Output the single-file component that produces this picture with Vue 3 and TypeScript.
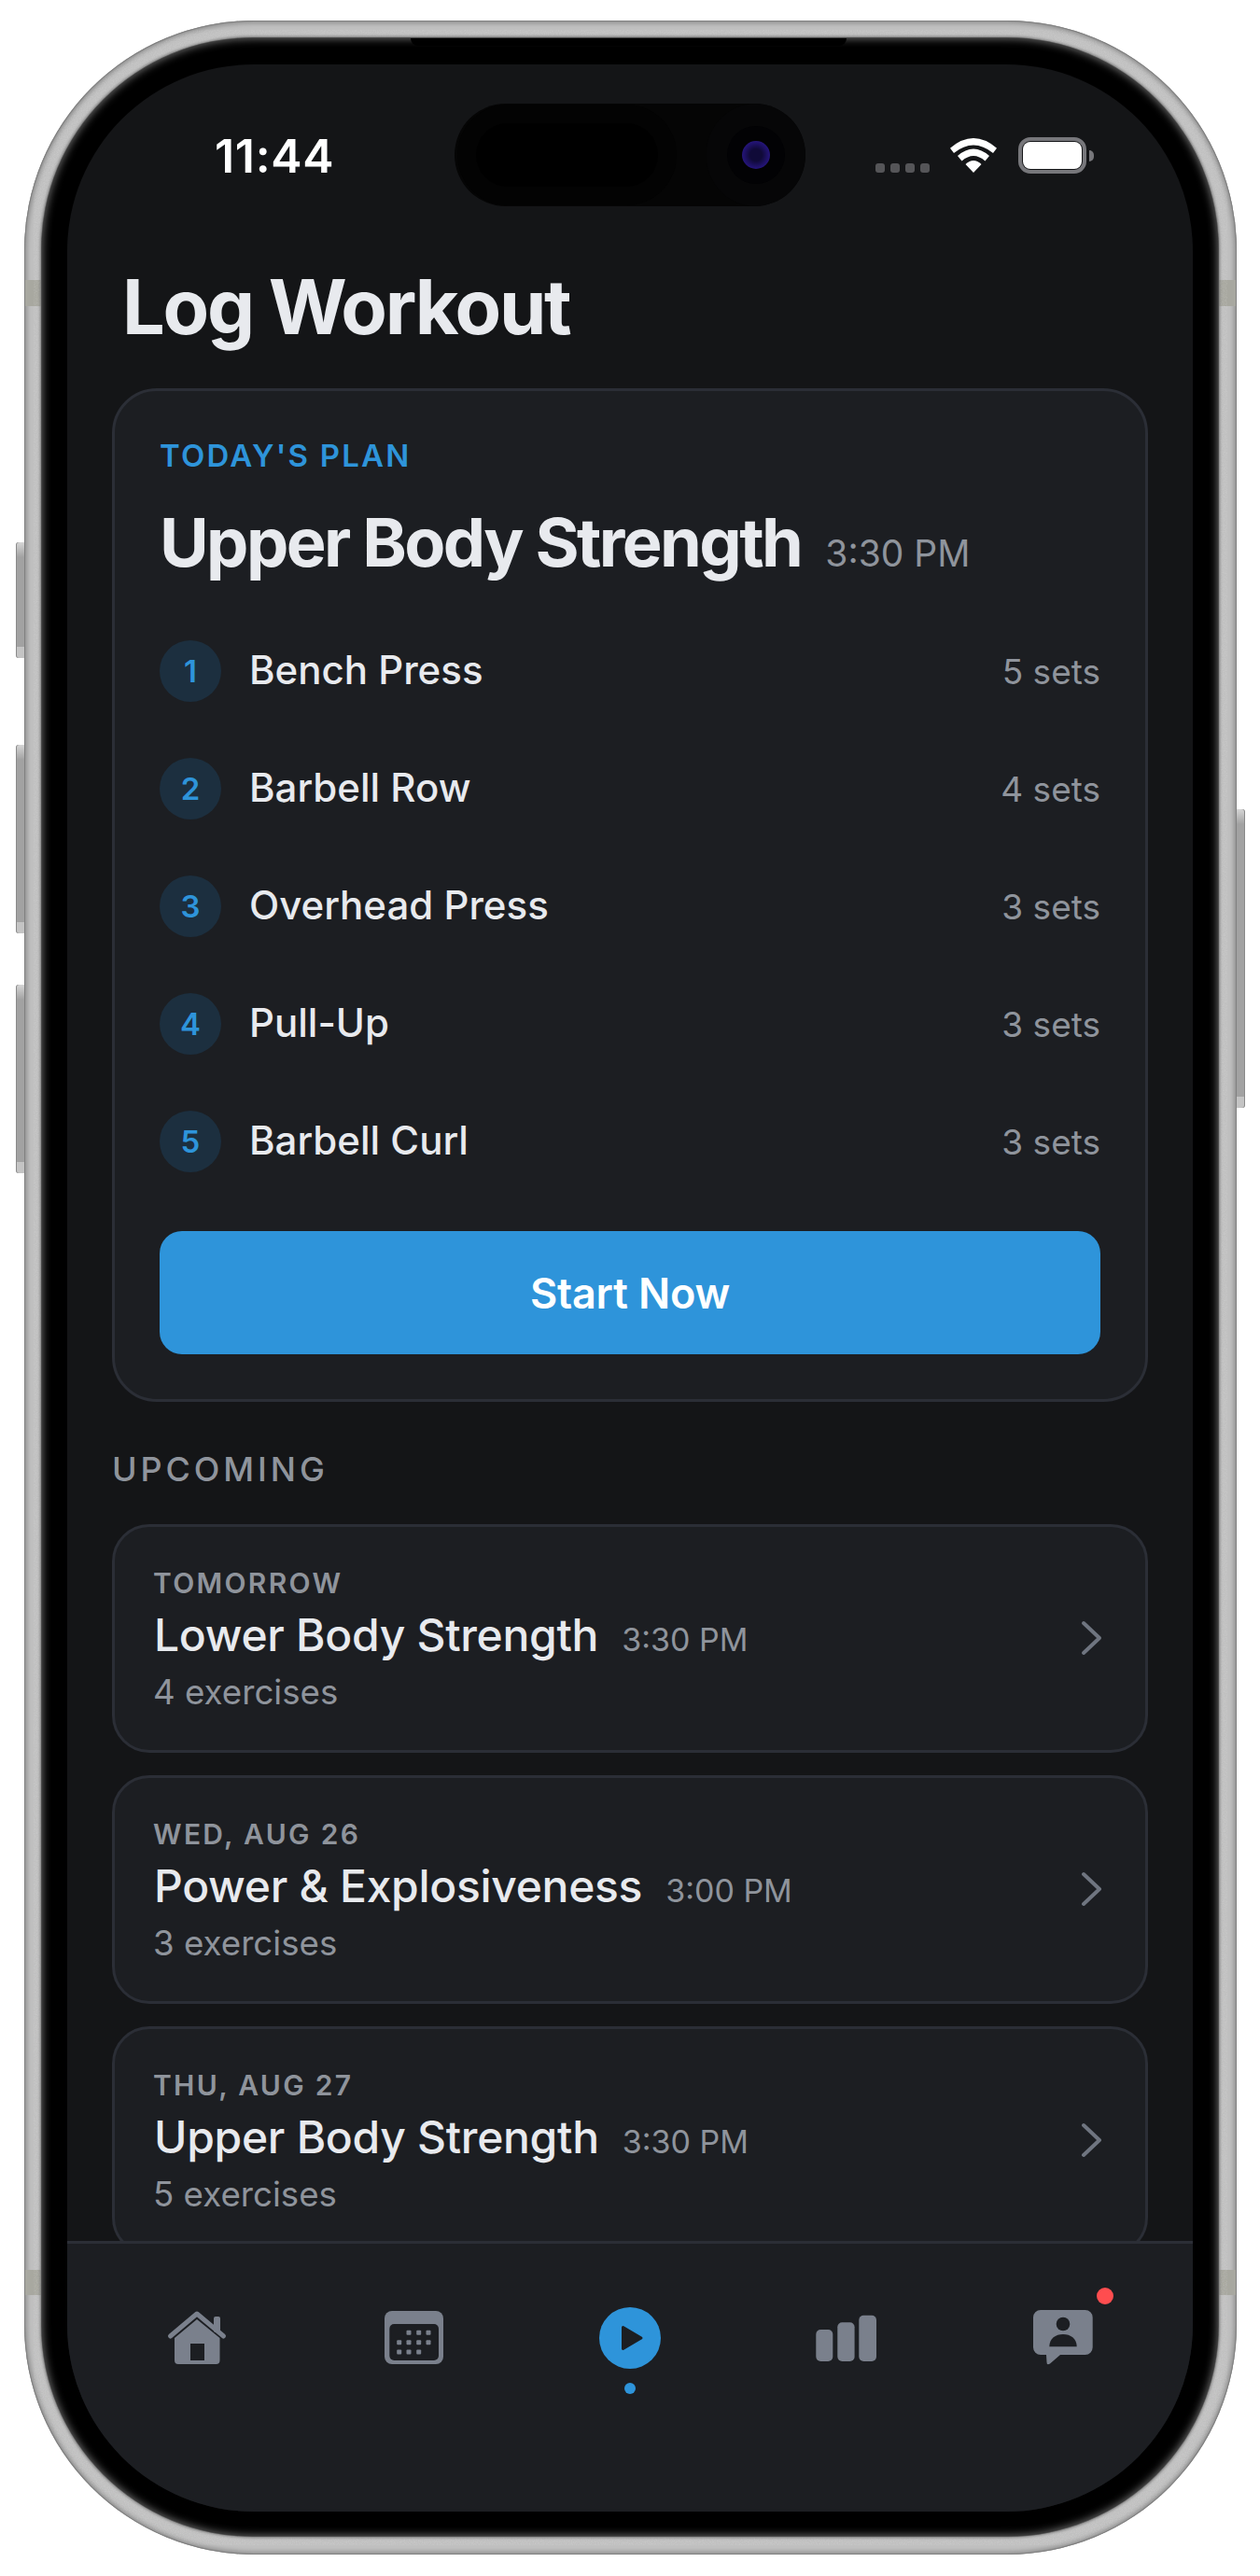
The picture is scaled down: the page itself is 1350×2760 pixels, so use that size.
<script setup lang="ts">
interface Exercise {
  name: string;
  sets: number;
}

interface Session {
  day: string;
  title: string;
  time: string;
  count: number;
}

const exercises: Exercise[] = [
  { name: 'Bench Press', sets: 5 },
  { name: 'Barbell Row', sets: 4 },
  { name: 'Overhead Press', sets: 3 },
  { name: 'Pull-Up', sets: 3 },
  { name: 'Barbell Curl', sets: 3 }
];

const upcoming: Session[] = [
  { day: 'TOMORROW', title: 'Lower Body Strength', time: '3:30 PM', count: 4 },
  { day: 'WED, AUG 26', title: 'Power & Explosiveness', time: '3:00 PM', count: 3 },
  { day: 'THU, AUG 27', title: 'Upper Body Strength', time: '3:30 PM', count: 5 }
];

// calendar grid dots, [x, y] centres
const calendarDots: number[][] = [
  [31, 27.3], [41.7, 27.3], [52, 27.3],
  [20.7, 37.7], [31, 37.7], [41.7, 37.7], [52, 37.7],
  [20.7, 48], [31, 48], [41.7, 48]
];
</script>

<template>
  <div class="stage">
    <div class="phone">
      <span class="side-btn left-1"></span>
      <span class="side-btn left-2"></span>
      <span class="side-btn left-3"></span>
      <span class="side-btn right-1"></span>
      <span class="band band-lt"></span>
      <span class="band band-rt"></span>
      <span class="band band-lb"></span>
      <span class="band band-rb"></span>

      <!-- brushed grain on the metal ring -->
      <svg class="grain" width="1299" height="2715" viewBox="0 0 1299 2715">
        <filter id="metal-grain" x="0" y="0" width="100%" height="100%">
          <feTurbulence type="fractalNoise" baseFrequency="0.8" numOctaves="2" seed="4" />
          <feColorMatrix values="0 0 0 0 1  0 0 0 0 1  0 0 0 0 1  0.9 0 0 0 -0.3" />
          <feComposite in2="SourceGraphic" operator="in" />
        </filter>
        <rect x="10" y="10" width="1279" height="2695" rx="238" fill="none" stroke="#fff" stroke-width="16" filter="url(#metal-grain)" />
      </svg>

      <div class="bezel">
        <span class="bezel-notch"></span>
        <div class="screen">
          <div class="island">
            <span class="island-sensor"></span>
            <span class="island-cam"><span class="lens"></span></span>
          </div>

          <div class="status">
            <span class="clock">11:44</span>
            <div class="status-icons">
              <div class="signal"><i></i><i></i><i></i><i></i></div>
              <svg class="wifi" width="50" height="37" viewBox="0 0 50 37" fill="#fff">
                <path d="M0 10.7Q25-10.7 50 10.7L46 16Q25-1 4 16Z" />
                <path d="M8 19Q25 4 42 19L37.5 24.5Q25 13.5 12.5 24.5Z" />
                <path d="M16.5 28Q25 20 33.5 28L25 37Z" />
              </svg>
              <div class="battery"><span class="battery-fill"></span></div>
              <span class="battery-nub"></span>
            </div>
          </div>

          <main class="content">
            <h1 class="page-title">Log Workout</h1>

            <section class="plan-card">
              <div class="eyebrow">TODAY'S PLAN</div>
              <div class="plan-head">
                <h2 class="plan-title">Upper Body Strength</h2>
                <span class="plan-time">3:30 PM</span>
              </div>
              <ul class="exercise-list">
                <li v-for="(ex, i) in exercises" :key="ex.name" class="exercise">
                  <span class="num">{{ i + 1 }}</span>
                  <span class="ex-name">{{ ex.name }}</span>
                  <span class="ex-sets">{{ ex.sets }} sets</span>
                </li>
              </ul>
              <button class="start-btn">Start Now</button>
            </section>

            <div class="section-label">UPCOMING</div>

            <div class="session-list">
              <article v-for="s in upcoming" :key="s.day" class="session">
                <div class="session-body">
                  <div class="session-day">{{ s.day }}</div>
                  <div class="session-head">
                    <span class="session-title">{{ s.title }}</span>
                    <span class="session-time">{{ s.time }}</span>
                  </div>
                  <div class="session-count">{{ s.count }} exercises</div>
                </div>
                <svg class="chevron" width="24" height="38" viewBox="0 0 24 38" fill="none">
                  <path d="M3 3L20 19L3 35" stroke="#6f7580" stroke-width="4" stroke-linecap="round" stroke-linejoin="round" />
                </svg>
              </article>
            </div>
          </main>

          <nav class="tabbar">
            <div class="tab">
              <svg width="72" height="66" viewBox="0 0 72 66" fill="#7a808c">
                <rect x="54" y="10" width="7" height="17" rx="2" />
                <path fill-rule="evenodd" d="M36 13L60.5 33V57a4 4 0 0 1-4 4H16a4 4 0 0 1-4-4V33ZM29 39V57H44V39Z" />
                <path d="M7.5 31L36 7L64.5 31" fill="none" stroke="#7a808c" stroke-width="5" stroke-linecap="round" stroke-linejoin="round" />
              </svg>
            </div>
            <div class="tab">
              <svg width="72" height="66" viewBox="0 0 72 66">
                <rect x="5" y="4" width="63" height="57" rx="8" fill="#7a808c" />
                <rect x="10.3" y="18" width="52.7" height="39" rx="5" fill="#1c1e22" />
                <rect v-for="(d, i) in calendarDots" :key="i" :x="d[0] - 2.5" :y="d[1] - 2.5" width="5" height="5" rx="1" fill="#7a808c" />
              </svg>
            </div>
            <div class="tab">
              <svg width="72" height="66" viewBox="0 0 72 66">
                <circle cx="36" cy="33" r="33" fill="#2e94da" />
                <path d="M28.5 21.5L48 33L28.5 44.5Z" fill="#1c1e22" stroke="#1c1e22" stroke-width="3" stroke-linejoin="round" />
              </svg>
              <span class="active-dot"></span>
            </div>
            <div class="tab">
              <svg width="72" height="66" viewBox="0 0 72 66" fill="#7a808c">
                <rect x="3.3" y="24" width="18" height="34" rx="5" />
                <rect x="26.3" y="16.3" width="18.3" height="41.7" rx="5" />
                <rect x="49.3" y="8.7" width="18.7" height="49.3" rx="5" />
              </svg>
            </div>
            <div class="tab">
              <span class="badge"></span>
              <svg width="72" height="66" viewBox="0 0 72 66">
                <path fill="#7a808c" d="M12 3H59.7a8 8 0 0 1 8 8V43a8 8 0 0 1-8 8H33L22 60.5Q18.5 62.5 18.5 59L18 51H12a8 8 0 0 1-8-8V11a8 8 0 0 1 8-8Z" />
                <circle cx="36" cy="18" r="7.3" fill="#1c1e22" />
                <path fill="#1c1e22" d="M21.3 42.3C21.3 33.5 28 29 36 29S50.7 33.5 50.7 42.3Z" />
              </svg>
            </div>
          </nav>
        </div>
      </div>
    </div>
  </div>
</template>

<style>
html,
body {
  margin: 0;
  background: #fff;
}
</style>

<style scoped>
.stage {
  width: 1350px;
  height: 2760px;
  padding: 22px 0 0 26px;
  box-sizing: border-box;
  overflow: hidden;
  font-family: Inter, "Liberation Sans", sans-serif;
}

.phone {
  position: relative;
  width: 1299px;
  height: 2715px;
  padding: 19px 20px 20px 19px;
  box-sizing: border-box;
  border-radius: 246px;
  background: #c0c0c0;
  box-shadow: inset 0 0 0 1px #808080, inset 0 0 5px 3px #8f8f8f;
}

.grain {
  position: absolute;
  left: 0;
  top: 0;
  opacity: 0.28;
}

.side-btn {
  position: absolute;
  width: 9px;
  background: linear-gradient(180deg, #d6d6d6 0, #a2a2a2 16px, #a2a2a2 calc(100% - 12px), #c4c4c4 calc(100% - 12px));
  box-shadow: inset 1px 0 0 #8a8a8a;
  border-radius: 3px 0 0 3px;
}

.left-1 { left: -9px; top: 559px; height: 124px; }
.left-2 { left: -9px; top: 776px; height: 202px; }
.left-3 { left: -9px; top: 1033px; height: 202px; }

.right-1 {
  right: -9px;
  left: auto;
  top: 845px;
  height: 320px;
  box-shadow: inset -1px 0 0 #8a8a8a;
  border-radius: 0 3px 3px 0;
}

.band {
  position: absolute;
  width: 18px;
  background: #a8a8a0;
}

.band-lt { left: 1px; top: 278px; height: 28px; }
.band-rt { right: 1px; top: 278px; height: 28px; }
.band-lb { left: 1px; top: 2410px; height: 27px; }
.band-rb { right: 1px; top: 2410px; height: 27px; }

.bezel {
  position: relative;
  height: 100%;
  padding: 28px 27px 26px;
  box-sizing: border-box;
  border-radius: 226px;
  background: #000;
  box-shadow: inset 0 0 10px #777, 0 0 0 1px #4a4a4a, 0 0 3px 2px #777;
}

.bezel-notch {
  position: absolute;
  left: 395px;
  top: 0;
  width: 467px;
  height: 8px;
  background: #000;
  border-radius: 0 0 10px 10px;
}

.screen {
  position: relative;
  display: flex;
  flex-direction: column;
  width: 1206px;
  height: 2622px;
  border-radius: 200px;
  overflow: hidden;
  background: #141517;
}

.island {
  position: absolute;
  left: 415px;
  top: 42px;
  width: 376px;
  height: 110px;
  border-radius: 55px;
  background: #050505;
  overflow: hidden;
  z-index: 2;
}

.island-sensor {
  position: absolute;
  left: 23px;
  top: 21px;
  width: 195px;
  height: 68px;
  border-radius: 34px;
  background: #000;
  box-shadow: 0 0 0 20px #030303;
}

.island-cam {
  position: absolute;
  left: 270px;
  top: 0;
  width: 106px;
  height: 110px;
  border-radius: 55px;
  background: #060607;
  display: flex;
  align-items: center;
  justify-content: center;
}

.lens {
  width: 30px;
  height: 30px;
  border-radius: 50%;
  background: radial-gradient(circle, #100a38 30%, #241478 68%, #141c44 95%);
  box-shadow: 0 0 0 16px #020204;
}

.status {
  display: flex;
  justify-content: space-between;
  flex: none;
  height: 128px;
  padding: 68px 106px 0 158px;
  box-sizing: border-box;
}

.clock {
  font-size: 50px;
  line-height: 60px;
  font-weight: 600;
  letter-spacing: 0.7px;
  color: #fff;
}

.status-icons {
  display: flex;
  align-items: flex-end;
  height: 39px;
  margin-top: 10px;
}

.signal {
  display: flex;
  gap: 6px;
  margin-right: 22px;
  margin-bottom: 1px;
}

.signal i {
  width: 10px;
  height: 10px;
  border-radius: 3px;
  background: #555558;
}

.wifi {
  margin-right: 23px;
  margin-bottom: 1px;
}

.battery {
  width: 73px;
  height: 39px;
  padding: 5px;
  box-sizing: border-box;
  border: 4px solid #77777b;
  border-radius: 13px;
  position: relative;
}

.battery-fill {
  position: absolute;
  inset: 1px;
  background: #fff;
  border-radius: 8px;
}

.battery-nub {
  width: 5px;
  height: 12px;
  margin: 0 0 13px 3px;
  background: #77777b;
  border-radius: 0 6px 6px 0;
}

.content {
  flex: 1;
  min-height: 0;
  overflow: hidden;
  padding: 0 48px;
}

.page-title {
  margin: 84px 0 39px;
  padding-left: 11px;
  font-size: 81px;
  line-height: 96px;
  font-weight: 700;
  letter-spacing: -2.3px;
  color: #e8eaee;
}

.plan-card {
  padding: 48px;
  background: #1c1e22;
  border: 3px solid #2b2e36;
  border-radius: 48px;
}

.eyebrow {
  font-size: 33px;
  line-height: 42px;
  font-weight: 600;
  letter-spacing: 2.2px;
  color: #2e94da;
}

.plan-head {
  display: flex;
  align-items: baseline;
  gap: 26px;
  margin-top: 29px;
}

.plan-title {
  margin: 0;
  font-size: 72px;
  line-height: 86px;
  font-weight: 700;
  letter-spacing: -2.6px;
  color: #e8eaee;
}

.plan-time {
  font-size: 39px;
  color: #8f949c;
}

.exercise-list {
  display: flex;
  flex-direction: column;
  gap: 60px;
  margin: 62px 0 0;
  padding: 0;
  list-style: none;
}

.exercise {
  display: flex;
  align-items: center;
  height: 66px;
}

.num {
  display: flex;
  align-items: center;
  justify-content: center;
  flex: none;
  width: 66px;
  height: 66px;
  margin-right: 30px;
  border-radius: 50%;
  background: #1c2f3f;
  font-size: 33px;
  font-weight: 600;
  color: #2e94da;
}

.ex-name {
  flex: 1;
  padding-bottom: 3px;
  font-size: 42px;
  font-weight: 500;
  color: #e8eaee;
}

.ex-sets {
  font-size: 37px;
  color: #8f949c;
}

.start-btn {
  display: block;
  width: 100%;
  height: 132px;
  margin-top: 63px;
  border: none;
  border-radius: 24px;
  background: #2e94da;
  font-family: inherit;
  font-size: 45px;
  font-weight: 600;
  letter-spacing: -0.2px;
  color: #fff;
}

.section-label {
  margin: 51px 0 38px;
  font-size: 36px;
  line-height: 42px;
  font-weight: 500;
  letter-spacing: 3.9px;
  color: #8f949c;
}

.session-list {
  display: flex;
  flex-direction: column;
  gap: 24px;
}

.session {
  display: flex;
  align-items: center;
  justify-content: space-between;
  padding: 42px 45px 40px 41px;
  background: #1c1e22;
  border: 3px solid #2b2e36;
  border-radius: 40px;
}

.session-day {
  font-size: 30px;
  line-height: 36px;
  font-weight: 600;
  letter-spacing: 2.3px;
  color: #8f949c;
}

.session-head {
  display: flex;
  align-items: baseline;
  gap: 25px;
  margin-top: 9px;
}

.session-title {
  padding-left: 1px;
  font-size: 48px;
  line-height: 58px;
  font-weight: 500;
  letter-spacing: -0.3px;
  color: #e8eaee;
}

.session-time {
  font-size: 34px;
  color: #8f949c;
}

.session-count {
  margin-top: 10px;
  font-size: 36.7px;
  line-height: 44px;
  color: #8f949c;
}

.chevron {
  margin-bottom: 3px;
}

.tabbar {
  display: grid;
  grid-template-columns: repeat(5, 1fr);
  flex: none;
  height: 290px;
  padding: 68px 23px 0;
  box-sizing: border-box;
  background: #1c1e22;
  border-top: 3px solid #2b2e36;
}

.tab {
  position: relative;
  display: flex;
  flex-direction: column;
  align-items: center;
}

.active-dot {
  width: 12px;
  height: 12px;
  margin-top: 15px;
  border-radius: 50%;
  background: #2e94da;
}

.badge {
  position: absolute;
  left: 152px;
  top: -21px;
  width: 18px;
  height: 18px;
  border-radius: 50%;
  background: #ff4d4f;
}
</style>
